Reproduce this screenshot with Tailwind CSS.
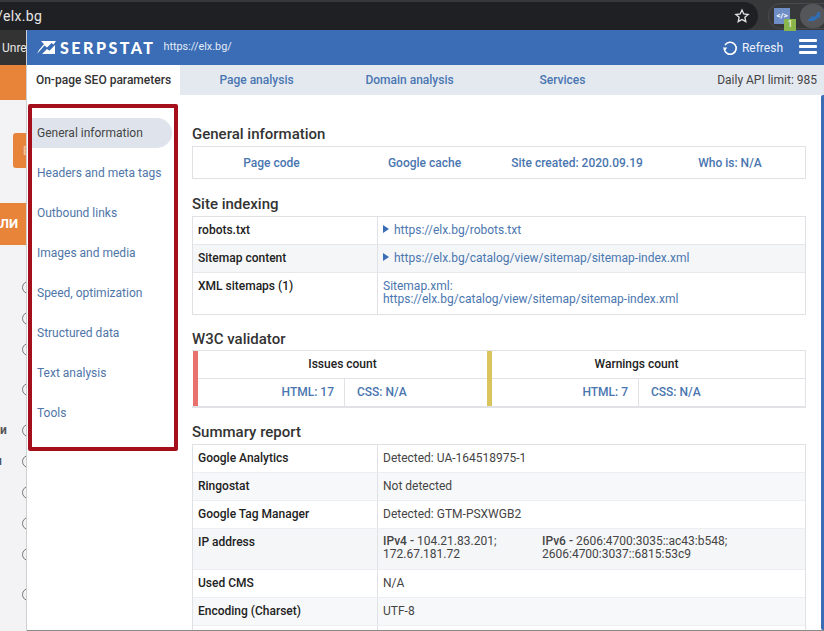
<!DOCTYPE html>
<html lang="en">
<head>
  <meta charset="UTF-8">
  <title>Serpstat</title>
  <script src="https://cdn.jsdelivr.net/npm/@tailwindcss/browser@4"></script>
</head>
<body class="bg-[#f3f3f5] h-[631px] w-[824px] overflow-hidden font-['Roboto',sans-serif] text-[12px] text-[#222]">

  <!-- Browser bar -->
  <div class="h-[30px] bg-[#37383a] flex items-center">
    <div class="h-[28px] mt-[2px] w-[758px] shrink-0 bg-[#1f2023] rounded-r-[14px] flex items-center justify-between pr-[8px] overflow-hidden">
      <span class="text-[14px] text-[#e6e6e6] -ml-[3px] tracking-[0.3px]">/elx.bg</span>
      <svg width="16" height="16" viewBox="0 0 24 24" fill="none" stroke="#e4e4e4" stroke-width="2"><path d="M12 3l2.7 6 6.5.7-4.9 4.3 1.4 6.4L12 17.1 6.3 20.4l1.4-6.4-4.9-4.3 6.5-.7z"/></svg>
    </div>
    <div class="ml-[10px] h-[26px] w-[60px] shrink-0 mt-[2px] rounded-l-[13px] border border-r-0 border-[#4a4a4c] flex items-center pl-[5px] gap-[10px]">
      <div class="relative w-[16px] h-[16px] shrink-0 bg-[#6f8ec6] flex items-center justify-center text-[8px] font-bold text-white">&lt;/&gt;
        <span class="absolute -right-[6px] -bottom-[7px] w-[12px] h-[12px] bg-[#8ab54c] text-[9px] font-normal flex items-center justify-center">1</span>
      </div>
      <div class="w-[26px] h-[24px] shrink-0 rounded-full bg-[#55565a] flex items-center justify-center">
        <svg width="14" height="10" viewBox="0 0 14 10"><path d="M1 10l5-5 2 1 4-4-2-1h4v8l-1-3-5 4z" fill="#2f6db5"/></svg>
      </div>
    </div>
  </div>

  <div class="flex h-[601px]">
    <!-- Page behind the popup -->
    <div class="w-[27px] shrink-0 overflow-hidden border-r border-[#cfcfd2]">
      <div class="h-[35px] bg-[#333] text-[#e8e8e8] text-[12px] flex items-center pl-[2px] whitespace-nowrap">Unre</div>
      <div class="h-[35px] bg-[#e8843a]"></div>
      <div class="h-[35px] mt-[33px] ml-[13px] bg-[#e8843a] rounded-l-[3px] text-white/50 text-[12px] font-medium flex items-center pl-[10px]">Е</div>
      <div class="h-[42px] mt-[35px] bg-[#e8843a] text-white font-bold text-[13px] flex items-center justify-end whitespace-nowrap pr-[8px]">ЛИ</div>
      <div class="mt-[36px] flex flex-col">
        <div class="h-[31px] pl-[22px]"><span class="block w-[13px] h-[13px] rounded-full border border-[#777]"></span></div>
        <div class="h-[31px] pl-[22px]"><span class="block w-[13px] h-[13px] rounded-full border border-[#777]"></span></div>
        <div class="h-[40px] pl-[22px]"><span class="block w-[13px] h-[13px] rounded-full border border-[#777]"></span></div>
        <div class="h-[41px] pl-[22px]"><span class="block w-[13px] h-[13px] rounded-full border border-[#777]"></span></div>
        <div class="h-[31px] flex items-start"><span class="w-[22px] shrink-0 -mt-[3px] text-[12px] font-bold text-[#555]">и</span><span class="w-[13px] h-[13px] shrink-0 rounded-full border border-[#777]"></span></div>
        <div class="h-[31px] flex items-start"><span class="w-[30px] shrink-0 -ml-[8px] -mt-[3px] text-[12px] font-bold text-[#555] text-left pl-[3px]">н</span><span class="w-[13px] h-[13px] shrink-0 rounded-full border border-[#777]"></span></div>
        <div class="h-[31px] pl-[22px]"><span class="block w-[13px] h-[13px] rounded-full border border-[#777]"></span></div>
        <div class="h-[31px] pl-[22px]"><span class="block w-[13px] h-[13px] rounded-full border border-[#777]"></span></div>
        <div class="h-[40px] pl-[22px]"><span class="block w-[13px] h-[13px] rounded-full border border-[#777]"></span></div>
        <div class="h-[31px] pl-[22px]"><span class="block w-[13px] h-[13px] rounded-full border border-[#777]"></span></div>
      </div>
    </div>

    <!-- Popup -->
    <div class="flex-1 flex flex-col bg-white min-w-0">
      <!-- Blue header -->
      <div class="h-[35px] shrink-0 bg-[#3a6db5] flex items-center pl-[10px] pr-[7px] text-white">
        <svg width="19" height="13" viewBox="0 0 19 13" fill="#fff"><path d="M4 0h15l-2.5 3.5-2-1.5-4.5 4.5L7.5 4.5 0 13l2-4 5-6z"/><path d="M5 13l5-5 2.500 1.800L18 4v9z"/></svg>
        <span class="ml-[4px] font-['Lato',sans-serif] font-black text-[16px] tracking-[2.5px]">SERPSTAT</span>
        <span class="ml-[8px] text-[10.8px] text-[#e3ebf6]">https://elx.bg/</span>
        <svg class="ml-auto" width="16" height="16" viewBox="0 0 16 16" fill="none" stroke="#fff" stroke-width="1.6"><path d="M3 5.200A6 6 0 1 1 2.200 9"/><path d="M0.800 7.600h4.400L3 10.600z" fill="#fff" stroke="none"/></svg>
        <span class="ml-[4px] text-[12px] text-[#edf2fa]">Refresh</span>
        <div class="ml-[16px] w-[18px] -mt-[2px] flex flex-col gap-[3px]">
          <span class="h-[3px] bg-white rounded-[1px]"></span>
          <span class="h-[3px] bg-white rounded-[1px]"></span>
          <span class="h-[3px] bg-white rounded-[1px]"></span>
        </div>
      </div>

      <!-- Tabs -->
      <div class="h-[30px] shrink-0 bg-[#e4e9f0] flex items-center font-medium">
        <div class="w-[153px] h-full bg-white flex items-center justify-center text-[#333] whitespace-nowrap">On-page SEO parameters</div>
        <div class="w-[153px] text-center text-[#4a76b0]">Page analysis</div>
        <div class="w-[153px] text-center text-[#4a76b0]">Domain analysis</div>
        <div class="w-[153px] text-center text-[#4a76b0]">Services</div>
        <div class="ml-auto pr-[7px] font-normal text-[#444]">Daily API limit: 985</div>
      </div>

      <div class="flex flex-1 min-h-0">
        <!-- Sidebar, red outline -->
        <div class="w-[165px] shrink-0 pt-[9px] pl-[1px]">
          <div class="w-[150px] h-[347px] border-[4px] border-[#a50f1c] rounded-[2px] pt-[10px] text-[#4f75a8]">
            <div class="h-[30px] w-[140px] bg-[#dfe4ec] rounded-r-[15px] flex items-center pl-[5px] text-[#444]">General information</div>
            <div class="h-[30px] mt-[10px] flex items-center pl-[5px]">Headers and meta tags</div>
            <div class="h-[30px] mt-[10px] flex items-center pl-[5px]">Outbound links</div>
            <div class="h-[30px] mt-[10px] flex items-center pl-[5px]">Images and media</div>
            <div class="h-[30px] mt-[10px] flex items-center pl-[5px]">Speed, optimization</div>
            <div class="h-[30px] mt-[10px] flex items-center pl-[5px]">Structured data</div>
            <div class="h-[30px] mt-[10px] flex items-center pl-[5px]">Text analysis</div>
            <div class="h-[30px] mt-[10px] flex items-center pl-[5px]">Tools</div>
          </div>
        </div>

        <!-- Content -->
        <div class="w-[614px] shrink-0 overflow-hidden">
          <h2 class="mt-[29px] h-[20px] leading-[20px] text-[15px] font-medium text-[#333]">General information</h2>
          <div class="mt-[2px] h-[33px] border border-[#dfe1e5] grid grid-cols-[157px_149px_156px_1fr] items-center text-center font-medium text-[#4a76b0]">
            <span>Page code</span>
            <span>Google cache</span>
            <span>Site created: 2020.09.19</span>
            <span>Who is: N/A</span>
          </div>

          <h2 class="mt-[15px] h-[20px] leading-[20px] text-[15px] font-medium text-[#333]">Site indexing</h2>
          <div class="mt-[2px] border border-b-0 border-[#dfe1e5]">
            <div class="h-[28px] flex border-b border-[#e6e8ec]">
              <div class="w-[185px] pl-[5px] pt-[4px] font-medium border-r border-[#dfe1e5]">robots.txt</div>
              <div class="pl-[5px] pt-[4px] text-[#4a76b0] flex items-start"><svg class="mt-[4px] mr-[5px]" width="6" height="8" viewBox="0 0 6 8" fill="#3a6db5"><path d="M0 0l6 4-6 4z"/></svg>https://elx.bg/robots.txt</div>
            </div>
            <div class="h-[28px] flex bg-[#f5f6f8] border-b border-[#e6e8ec]">
              <div class="w-[185px] pl-[5px] pt-[4px] font-medium border-r border-[#dfe1e5]">Sitemap content</div>
              <div class="pl-[5px] pt-[4px] text-[#4a76b0] flex items-start"><svg class="mt-[4px] mr-[5px]" width="6" height="8" viewBox="0 0 6 8" fill="#3a6db5"><path d="M0 0l6 4-6 4z"/></svg>https://elx.bg/catalog/view/sitemap/sitemap-index.xml</div>
            </div>
            <div class="h-[42px] flex border-b border-[#dfe1e5]">
              <div class="w-[185px] pl-[5px] pt-[4px] font-medium border-r border-[#dfe1e5]">XML sitemaps (1)</div>
              <div class="pl-[5px] pt-[7px] leading-[13px] text-[#4a76b0]">Sitemap.xml:<br>https://elx.bg/catalog/view/sitemap/sitemap-index.xml</div>
            </div>
          </div>

          <h2 class="mt-[14px] h-[20px] leading-[20px] text-[15px] font-medium text-[#333]">W3C validator</h2>
          <div class="mt-[1px] grid grid-cols-[295px_1fr] border-r border-b-2 border-t border-[#e0e2e6]">
            <div class="border-l-[5px] border-[#e8736e] ml-[1px]">
              <div class="h-[28px] pb-[2px] flex items-center justify-center font-medium text-[#222] border-b border-[#e0e2e6]">Issues count</div>
              <div class="h-[27px] grid grid-cols-[147px_1fr] text-[#4a76b0] font-medium">
                <div class="flex items-center justify-end pr-[10px] pb-[1px] border-r border-[#e0e2e6]">HTML: 17</div>
                <div class="flex items-center pl-[12px] pb-[1px]">CSS: N/A</div>
              </div>
            </div>
            <div class="border-l-[5px] border-[#d9c55c]">
              <div class="h-[28px] pb-[2px] flex items-center justify-center pr-[24px] font-medium text-[#222] border-b border-[#e0e2e6]">Warnings count</div>
              <div class="h-[27px] grid grid-cols-[147px_1fr] text-[#4a76b0] font-medium">
                <div class="flex items-center justify-end pr-[10px] pb-[1px] border-r border-[#e0e2e6]">HTML: 7</div>
                <div class="flex items-center pl-[12px] pb-[1px]">CSS: N/A</div>
              </div>
            </div>
          </div>

          <h2 class="mt-[14px] h-[20px] leading-[20px] text-[15px] font-medium text-[#333]">Summary report</h2>
          <div class="mt-[2px] border border-b-0 border-[#dfe1e5]">
            <div class="h-[28px] flex border-b border-[#eceef1]">
              <div class="w-[185px] pl-[5px] pt-[4px] font-medium border-r border-[#dfe1e5]">Google Analytics</div>
              <div class="pl-[5px] pt-[4px] text-[#444]">Detected: UA-164518975-1</div>
            </div>
            <div class="h-[28px] flex bg-[#f7f8f9] border-b border-[#eceef1]">
              <div class="w-[185px] pl-[5px] pt-[4px] font-medium border-r border-[#dfe1e5]">Ringostat</div>
              <div class="pl-[5px] pt-[4px] text-[#444]">Not detected</div>
            </div>
            <div class="h-[28px] flex border-b border-[#eceef1]">
              <div class="w-[185px] pl-[5px] pt-[4px] font-medium border-r border-[#dfe1e5]">Google Tag Manager</div>
              <div class="pl-[5px] pt-[4px] text-[#444]">Detected: GTM-PSXWGB2</div>
            </div>
            <div class="h-[41px] flex bg-[#f5f6f8] border-b border-[#eceef1]">
              <div class="w-[185px] pl-[5px] pt-[4px] font-medium border-r border-[#dfe1e5]">IP address</div>
              <div class="w-[164px] pl-[5px] pt-[6px] leading-[13px] text-[#444]"><b class="font-medium">IPv4 -</b> 104.21.83.201;<br>172.67.181.72</div>
              <div class="pt-[6px] leading-[13px] text-[#444]"><b class="font-medium">IPv6 -</b> 2606:4700:3035::ac43:b548;<br>2606:4700:3037::6815:53c9</div>
            </div>
            <div class="h-[28px] flex border-b border-[#eceef1]">
              <div class="w-[185px] pl-[5px] pt-[4px] font-medium border-r border-[#dfe1e5]">Used CMS</div>
              <div class="pl-[5px] pt-[4px] text-[#444]">N/A</div>
            </div>
            <div class="h-[28px] flex bg-[#f7f8f9] border-b border-[#eceef1]">
              <div class="w-[185px] pl-[5px] pt-[4px] font-medium border-r border-[#dfe1e5]">Encoding (Charset)</div>
              <div class="pl-[5px] pt-[4px] text-[#444]">UTF-8</div>
            </div>
            <div class="h-[28px] flex">
              <div class="w-[185px] border-r border-[#dfe1e5]"></div>
            </div>
          </div>
        </div>

        <!-- Scrollbar -->
        <div class="ml-auto w-[3px] bg-[#3a6db5] rounded-l-[2px]"></div>
      </div>
      <div class="h-[1px] shrink-0 bg-[#8a8a86]"></div>
    </div>
  </div>

</body>
</html>
